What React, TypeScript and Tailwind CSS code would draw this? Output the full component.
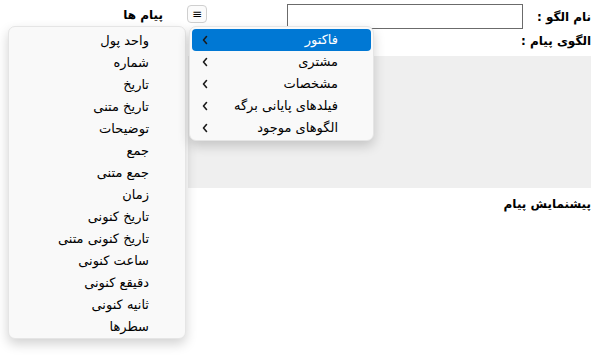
const fields = [
  "واحد پول",
  "شماره",
  "تاریخ",
  "تاریخ متنی",
  "توضیحات",
  "جمع",
  "جمع متنی",
  "زمان",
  "تاریخ کنونی",
  "تاریخ کنونی متنی",
  "ساعت کنونی",
  "دقیقع کنونی",
  "ثانیه کنونی",
  "سطرها",
];

const groups = ["فاکتور", "مشتری", "مشخصات", "فیلدهای پایانی برگه", "الگوهای موجود"];

function Chevron() {
  return (
    <svg width="8" height="10" viewBox="0 0 8 10" className="shrink-0">
      <path d="M5.5 1.5 L2.5 5 L5.5 8.5" fill="none" stroke="#1b1b1b" strokeWidth="1.6" strokeLinecap="round" strokeLinejoin="round" />
    </svg>
  );
}

export default function App() {
  return (
    <div
      dir="rtl"
      className="relative flex h-[358px] w-[595px] overflow-hidden bg-white font-['DejaVu_Sans',sans-serif] text-[13px] text-black"
    >
      {/* right side: template editor */}
      <div className="flex w-[407px] shrink-0 flex-col pr-[4px] pl-0">
        <div className="flex h-[34px] items-start pt-[4px]">
          <span className="w-[68px] pt-[4px] text-[12px] font-bold">نام الگو :</span>
          <input className="h-[25px] w-[236px] border border-[#6b6b6b] bg-white" />
          <div className="flex-1" />
          <button className="mt-[1px] ml-[-1px] flex h-[18px] w-[20px] items-center justify-center rounded-[4px] border border-[#cfcfcf] bg-[#fbfbfb] text-[12px] leading-none">
            ≡
          </button>
        </div>
        <div className="h-[22px] text-[12px] font-bold leading-[14px]">الگوی پیام :</div>
        <div className="h-[132px] bg-[#efefef]" />
        <div className="mt-[7px] text-[12px] font-bold">پیشنمایش پیام</div>
      </div>

      {/* left side: messages */}
      <div className="flex-1 pr-[25px] pt-[6px]">
        <div className="text-[12px] font-bold">پیام ها</div>
      </div>

      {/* fields submenu */}
      <div className="absolute left-[8px] top-[26px] w-[178px] rounded-[7px] border border-[#e5e5e5] bg-[#f9f9f9] pt-[3px] shadow-[0_5px_12px_rgba(0,0,0,0.18)]">
        {fields.map((f) => (
          <div key={f} className="flex h-[22px] items-center pr-[36px]">
            {f}
          </div>
        ))}
      </div>

      {/* groups menu */}
      <div className="absolute left-[189px] top-[26px] w-[185px] rounded-[7px] border border-[#e5e5e5] bg-[#f9f9f9] px-[2px] pt-[2px] pb-[1px] shadow-[0_5px_12px_rgba(0,0,0,0.18)]">
        {groups.map((g, i) => (
          <div
            key={g}
            className={
              i === 0
                ? "flex h-[22px] items-center justify-between rounded-[4px] bg-[#0078d4] pr-[33px] pl-[9px] text-white"
                : "flex h-[22px] items-center justify-between pr-[33px] pl-[9px]"
            }
          >
            <span>{g}</span>
            <Chevron />
          </div>
        ))}
      </div>
    </div>
  );
}
